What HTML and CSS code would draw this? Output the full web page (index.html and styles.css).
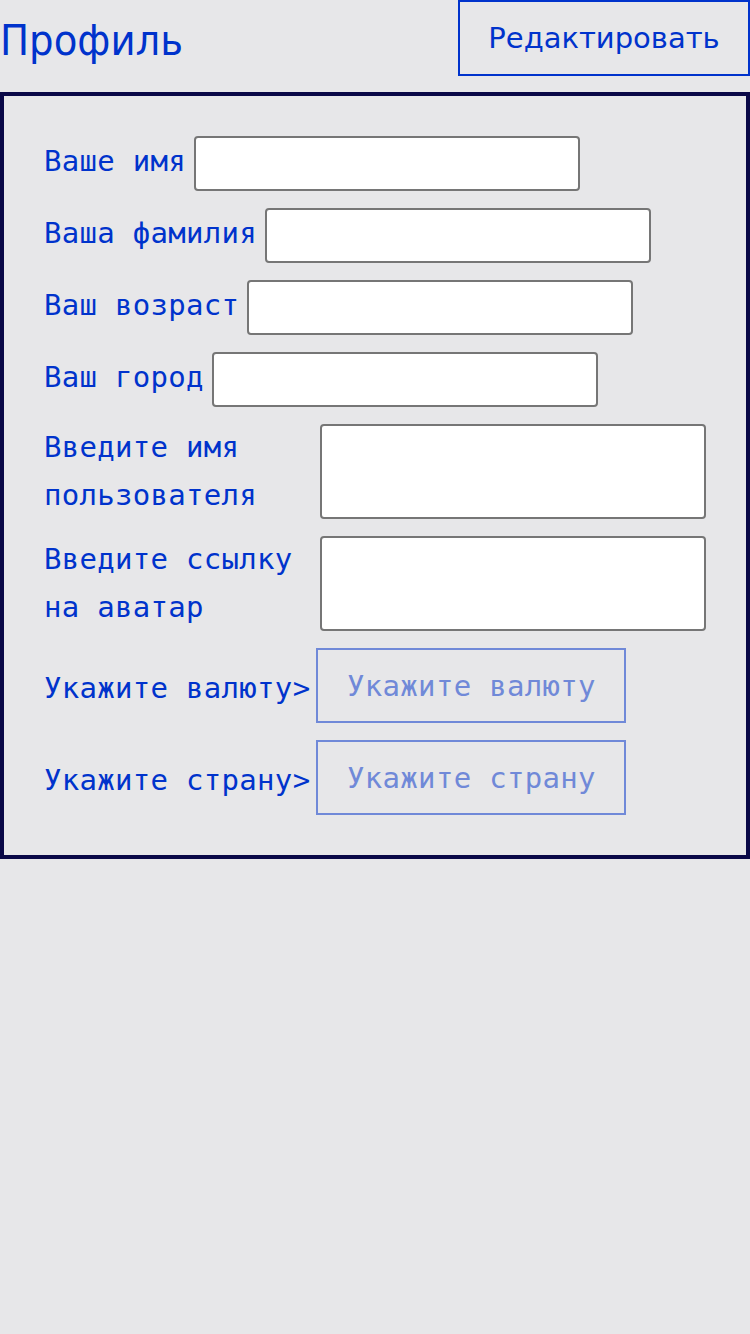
FILE: index.html
```html
<!DOCTYPE html>
<html lang="ru">
<head>
<meta charset="utf-8">
<title>Профиль</title>
<link rel="stylesheet" href="styles.css">
</head>
<body>
<header class="header">
  <h1 class="title">Профиль</h1>
  <button class="edit-btn" type="button">Редактировать</button>
</header>
<form class="profile-form">
  <div class="row">
    <label class="label label-input">Ваше имя</label>
    <input class="field" type="text">
  </div>
  <div class="row">
    <label class="label label-input">Ваша фамилия</label>
    <input class="field" type="text">
  </div>
  <div class="row">
    <label class="label label-input">Ваш возраст</label>
    <input class="field" type="text">
  </div>
  <div class="row">
    <label class="label label-input">Ваш город</label>
    <input class="field" type="text">
  </div>
  <div class="row">
    <label class="label label-wide">Введите имя пользователя</label>
    <textarea class="area"></textarea>
  </div>
  <div class="row">
    <label class="label label-wide">Введите ссылку на аватар</label>
    <textarea class="area"></textarea>
  </div>
  <div class="row">
    <span class="label label-pick">Укажите валюту&gt;</span>
    <button class="pick" type="button">Укажите валюту</button>
  </div>
  <div class="row">
    <span class="label label-pick">Укажите страну&gt;</span>
    <button class="pick" type="button">Укажите страну</button>
  </div>
</form>
</body>
</html>
```
FILE: styles.css
```css
html, body {
  margin: 0;
  padding: 0;
  background: #e7e7e9;
}

body {
  width: 750px;
  min-height: 1334px;
  font-family: "DejaVu Sans", sans-serif;
}

.header {
  display: flex;
  justify-content: space-between;
  align-items: center;
  height: 76px;
  margin-bottom: 16px;
}

.title {
  margin: 0;
  font-family: "DejaVu Sans", sans-serif;
  font-stretch: condensed;
  font-weight: normal;
  font-size: 43px;
  color: #0033cc;
  line-height: 1;
  padding-top: 4px;
}

.edit-btn {
  box-sizing: border-box;
  width: 292px;
  height: 76px;
  margin: 0;
  padding: 0;
  border: 2px solid #0033cc;
  background: transparent;
  color: #0033cc;
  font-family: "DejaVu Sans", sans-serif;
  font-size: 29px;
}

.profile-form {
  margin: 0;
  border: 4px solid #0a0847;
  padding: 40px;
  display: flex;
  flex-direction: column;
  gap: 17px;
}

.row {
  display: flex;
  align-items: center;
}

.label {
  font-family: "DejaVu Sans Mono", monospace;
  font-size: 29px;
  letter-spacing: 0.3px;
  line-height: 48px;
  color: #0033cc;
  white-space: nowrap;
}

.label-input {
  margin-bottom: 6px;
}

.label-pick {
  margin-top: 4px;
}

.label-wide {
  width: 268px;
  line-height: 47.5px;
  white-space: normal;
}

.field,
.area {
  box-sizing: border-box;
  width: 386px;
  margin: 0 0 0 8px;
  border: 2px solid #767676;
  border-radius: 4px;
  background: #fff;
  padding: 0;
}

.field {
  height: 55px;
}

.area {
  height: 95px;
  resize: none;
}

.pick {
  box-sizing: border-box;
  width: 310px;
  height: 75px;
  margin: 0 0 0 6px;
  padding: 0;
  border: 2px solid #7089d8;
  background: transparent;
  color: #7089d8;
  font-family: "DejaVu Sans Mono", monospace;
  font-size: 29px;
  letter-spacing: 0.3px;
}
```
